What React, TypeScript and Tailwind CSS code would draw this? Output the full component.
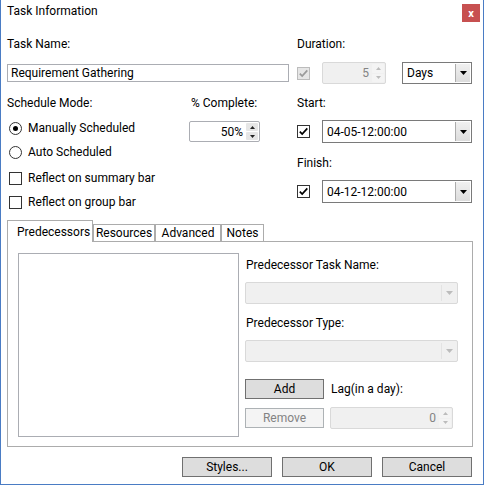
import React from "react";

// Task Information dialog (WPF Gantt style), 484x485.

type BoxProps = { className?: string; disabled?: boolean; children?: React.ReactNode };

function Triangle({ up, color }: { up?: boolean; color: string }) {
  return (
    <svg width="7" height="4" viewBox="0 0 7 4">
      <path d={up ? "M0 4L3.5 0L7 4Z" : "M0 0L7 0L3.5 4Z"} fill={color} />
    </svg>
  );
}

function SmallTriangle({ up, color }: { up?: boolean; color: string }) {
  return (
    <svg width="5" height="3" viewBox="0 0 5 3">
      <path d={up ? "M0 3L2.5 0L5 3Z" : "M0 0L5 0L2.5 3Z"} fill={color} />
    </svg>
  );
}

function CheckBox({ checked, disabled }: { checked?: boolean; disabled?: boolean }) {
  return (
    <span
      className={`flex h-[13px] w-[13px] shrink-0 items-center justify-center border ${
        disabled ? "border-[#bcbcbc] bg-[#e6e6e6]" : "border-[#333333] bg-white"
      }`}
    >
      {checked && (
        <svg width="11" height="11" viewBox="0 0 11 11">
          <path
            d="M1.8 5.6L4.2 8.1L9.3 2.4"
            fill="none"
            stroke={disabled ? "#9a9a9a" : "#000000"}
            strokeWidth="1.7"
          />
        </svg>
      )}
    </span>
  );
}

function Radio({ checked }: { checked?: boolean }) {
  return (
    <span className="flex h-[13px] w-[13px] shrink-0 items-center justify-center rounded-full border border-[#333333] bg-white">
      {checked && <span className="h-[5px] w-[5px] rounded-full bg-black" />}
    </span>
  );
}

function SpinBox({ value, className, disabled }: BoxProps & { value: string }) {
  return (
    <div
      className={`flex rounded-[2px] border ${
        disabled ? "border-[#d9d9d9] bg-[#f0f0f0] text-[#838383]" : "border-[#abadb3] bg-white text-black"
      } ${className ?? ""}`}
    >
      <div className="flex flex-1 items-center justify-end pr-[3px]">{value}</div>
      <div className="flex w-[13px] flex-col gap-[1px] py-[1px] pr-[1px]">
        <div
          className={`flex flex-1 items-center justify-center rounded-[1px] ${
            disabled ? "bg-[#f4f4f4]" : "bg-[#e6e6e6]"
          }`}
        >
          <SmallTriangle up color={disabled ? "#bcbcbc" : "#222222"} />
        </div>
        <div
          className={`flex flex-1 items-center justify-center rounded-[1px] ${
            disabled ? "bg-[#f4f4f4]" : "bg-[#e6e6e6]"
          }`}
        >
          <SmallTriangle color={disabled ? "#bcbcbc" : "#222222"} />
        </div>
      </div>
    </div>
  );
}

function Combo({ value, className, disabled }: BoxProps & { value?: string }) {
  if (disabled) {
    return (
      <div className={`flex rounded-[2px] border border-[#d9d9d9] bg-[#f0f0f0] ${className ?? ""}`}>
        <div className="flex-1" />
        <div className="my-[2px] flex w-[16px] items-center justify-center border-l border-[#e3e3e3]">
          <Triangle color="#bcbcbc" />
        </div>
      </div>
    );
  }
  return (
    <div className={`flex border border-[#7a7a7a] bg-white ${className ?? ""}`}>
      <div className="flex flex-1 items-center pl-[4px]">{value}</div>
      <div className="m-[1px] flex w-[15px] items-center justify-center border-l border-[#acacac] bg-gradient-to-b from-[#f0f0f0] to-[#dcdcdc]">
        <Triangle color="#000000" />
      </div>
    </div>
  );
}

function Btn({ children, className, disabled }: BoxProps) {
  return (
    <div
      className={`flex items-center justify-center border ${
        disabled ? "border-[#adb2b5] bg-[#f4f4f4] text-[#838383]" : "border-[#707070] bg-[#dddddd]"
      } ${className ?? ""}`}
    >
      {children}
    </div>
  );
}

export default function App() {
  return (
    <div className="flex h-[485px] w-[484px] flex-col border-x border-b border-[#4a7cc4] bg-white font-['Roboto','Segoe_UI',sans-serif] text-[12px] leading-[16px] text-black">
      {/* title bar */}
      <div className="flex h-[26px] shrink-0 items-start justify-between">
        <span className="pl-[6px] pt-[3px]">Task Information</span>
        <div className="mr-[3px] mt-[4px] flex h-[18px] w-[18px] items-center justify-center bg-[#c75050] text-[11px] font-bold leading-none text-white">
          x
        </div>
      </div>

      {/* top fields */}
      <div className="flex h-[194px] shrink-0 pl-[6px]">
        <div className="flex w-[282px] flex-col">
          <span className="mt-[10px]">Task Name:</span>
          <div className="mt-[12px] flex h-[18px] items-center border border-[#abadb3] pl-[3px]">
            Requirement Gathering
          </div>
          <div className="mt-[13px] flex">
            <div className="flex w-[182px] flex-col">
              <span>Schedule Mode:</span>
              <div className="mt-[9px] flex h-[16px] items-center pl-[2px]">
                <Radio checked />
                <span className="ml-[6px]">Manually Scheduled</span>
              </div>
              <div className="mt-[8px] flex h-[16px] items-center pl-[2px]">
                <Radio />
                <span className="ml-[6px]">Auto Scheduled</span>
              </div>
              <div className="mt-[10px] flex h-[16px] items-center pl-[2px]">
                <CheckBox />
                <span className="ml-[6px]">Reflect on summary bar</span>
              </div>
              <div className="mt-[8px] flex h-[16px] items-center pl-[2px]">
                <CheckBox />
                <span className="ml-[6px]">Reflect on group bar</span>
              </div>
            </div>
            <div className="flex flex-col">
              <span className="pl-[2px]">% Complete:</span>
              <SpinBox value="50%" className="mt-[10px] h-[21px] w-[71px]" />
            </div>
          </div>
        </div>

        <div className="ml-[8px] flex w-[175px] flex-col">
          <span className="mt-[10px]">Duration:</span>
          <div className="mt-[10px] flex h-[22px] items-center">
            <CheckBox checked disabled />
            <SpinBox value="5" disabled className="ml-[12px] h-[22px] w-[64px]" />
            <Combo value="Days" className="ml-[16px] h-[22px] w-[70px]" />
          </div>
          <span className="mt-[11px]">Start:</span>
          <div className="mt-[9px] flex h-[23px] items-center">
            <CheckBox checked />
            <Combo value="04-05-12:00:00" className="ml-[12px] h-[23px] w-[150px]" />
          </div>
          <span className="mt-[12px]">Finish:</span>
          <div className="mt-[9px] flex h-[23px] items-center">
            <CheckBox checked />
            <Combo value="04-12-12:00:00" className="ml-[12px] h-[23px] w-[150px]" />
          </div>
        </div>
      </div>

      {/* tabs */}
      <div className="ml-[6px] flex h-[22px] shrink-0 items-end">
        <div className="relative z-10 h-[22px] w-[86px] border-x border-t border-[#acacac] bg-white pl-[9px] pt-[3px]">
          Predecessors
        </div>
        <div className="flex h-[18px] w-[62px] items-center justify-center border-x border-t border-[#acacac] bg-white pb-[1px]">
          Resources
        </div>
        <div className="flex h-[18px] w-[66px] items-center justify-center border-x border-t border-[#acacac] bg-white pb-[1px]">
          Advanced
        </div>
        <div className="flex h-[18px] w-[43px] items-center justify-center border-x border-t border-[#acacac] bg-white pb-[1px]">
          Notes
        </div>
      </div>

      <div className="-mt-[1px] ml-[6px] flex h-[206px] w-[466px] shrink-0 border border-[#acacac] pl-[10px] pt-[11px]">
        <div className="h-[184px] w-[221px] border border-[#abadb3] bg-white" />
        <div className="ml-[6px] flex w-[214px] flex-col">
          <span className="mt-[4px] pl-[1px]">Predecessor Task Name:</span>
          <Combo disabled className="mt-[9px] h-[22px] w-[213px]" />
          <span className="mt-[11px] pl-[1px]">Predecessor Type:</span>
          <Combo disabled className="mt-[9px] h-[22px] w-[213px]" />
          <div className="mt-[17px] flex h-[20px] items-center">
            <Btn className="h-[20px] w-[79px]">Add</Btn>
            <span className="ml-[7px]">Lag(in a day):</span>
          </div>
          <div className="mt-[8px] flex h-[22px] items-center">
            <Btn disabled className="h-[20px] w-[79px]">
              Remove
            </Btn>
            <SpinBox value="0" disabled className="ml-[6px] h-[22px] w-[123px]" />
          </div>
        </div>
      </div>

      {/* dialog buttons */}
      <div className="mt-[10px] flex justify-end gap-[10px] pr-[11px]">
        <Btn className="h-[20px] w-[90px]">Styles...</Btn>
        <Btn className="h-[20px] w-[90px]">OK</Btn>
        <Btn className="h-[20px] w-[90px]">Cancel</Btn>
      </div>
    </div>
  );
}
